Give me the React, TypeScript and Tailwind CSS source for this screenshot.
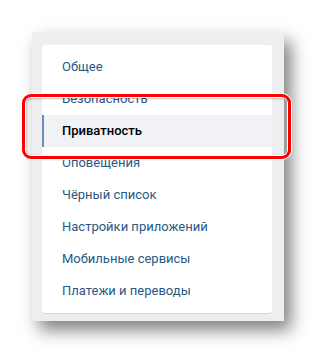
const items = [
  "Общее",
  "Безопасность",
  "Приватность",
  "Оповещения",
  "Чёрный список",
  "Настройки приложений",
  "Мобильные сервисы",
  "Платежи и переводы",
];

const activeItem = "Приватность";

export default function App() {
  return (
    <main className="relative h-[353px] w-[316px] overflow-hidden bg-white pl-8 pt-8 font-['Roboto',sans-serif]">
      <div className="w-[252px] bg-[#edeef0] pb-2 pl-[10px] pr-3 pt-[13px] shadow-[7px_9px_16px_rgba(0,0,0,0.5)]">
        <nav className="rounded-[3px] bg-white py-[6px] shadow-[0_1px_0_0_#d7d8db]">
          {items.map((item) => {
            const active = item === activeItem;
            return (
              <div
                key={item}
                className={
                  active
                    ? "flex h-8 items-center border-l-2 border-[#6c8cb6] bg-[#f0f2f5] pl-[18px] text-[13px] font-medium text-black"
                    : "flex h-8 items-center pl-5 text-[13px] text-[#2a5885]"
                }
              >
                {item}
              </div>
            );
          })}
        </nav>
      </div>

      <div className="pointer-events-none absolute left-[22px] top-[94px] h-[65px] w-[269px] rounded-[9px] border-[3px] border-[#ff0000] shadow-[0_0_0_1px_#ffffff,inset_0_0_0_1px_#ffffff,inset_1px_1px_3px_rgba(0,0,0,0.45)]" />
    </main>
  );
}
